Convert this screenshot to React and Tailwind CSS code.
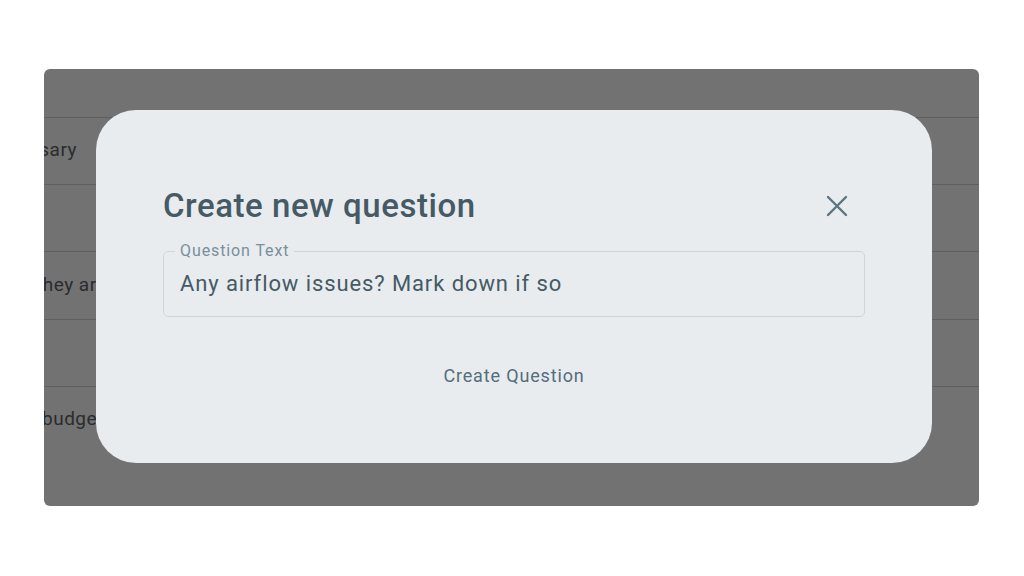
import React from 'react';

const rows = [
  { h: 'h-[48px]' },
  { h: 'h-[67px]', text: 'if it is necessary', cls: 'w-[33px] justify-end' },
  { h: 'h-[67px]' },
  { h: 'h-[68px]', text: 'they are okay', cls: '-ml-[8px]' },
  { h: 'h-[67px]' },
  { h: 'h-[67px]', text: 'budget', cls: '-ml-[2px]' },
];

const CloseIcon = () => (
  <svg width="22" height="22" viewBox="0 0 22 22" fill="none">
    <path d="M2 2 L20 20 M20 2 L2 20" stroke="#5b7582" strokeWidth="2.4" strokeLinecap="round" />
  </svg>
);

export default function App() {
  return (
    <div className="w-[1024px] h-[576px] bg-white pt-[69px] pl-[44px] font-['Roboto',sans-serif]">
      <div className="relative w-[935px] h-[437px] rounded-[6px] bg-[#727272] overflow-hidden">
        {rows.map((r, i) => (
          <div
            key={i}
            className={`${r.h} flex items-center ${i > 0 ? 'border-t border-[#5f5f5f]' : ''}`}
          >
            {r.text && (
              <div className={`${r.cls} shrink-0 flex whitespace-nowrap text-[19px] leading-[22px] tracking-[0.5px] text-[#2a2c2e] -mt-[2px]`}>
                {r.text}
              </div>
            )}
          </div>
        ))}

        {/* modal */}
        <div className="absolute left-[52px] top-[41px] w-[836px] h-[353px] rounded-[40px] bg-[#e8ecef] px-[67px] pt-[76px]">
          <div className="flex items-center justify-between h-[40px] pr-[17px]">
            <h2 className="text-[33px] font-medium text-[#455a64] tracking-[0.55px]">Create new question</h2>
            <button className="flex items-center justify-center">
              <CloseIcon />
            </button>
          </div>

          <div className="relative mt-[25px] h-[66px] rounded-[5px] border border-[#cfd5d9] flex items-center px-[16px]">
            <span className="absolute left-[11px] -top-[11px] px-[5px] bg-[#e8ecef] text-[16px] leading-[20px] tracking-[0.9px] text-[#78909c]">
              Question Text
            </span>
            <span className="text-[22px] text-[#455a64] tracking-[0.9px] mt-[-1px]">Any airflow issues? Mark down if so</span>
          </div>

          <div className="flex justify-center mt-[41px]">
            <button className="text-[18px] text-[#546e7a] tracking-[0.85px] px-3 py-1">Create Question</button>
          </div>
        </div>
      </div>
    </div>
  );
}
